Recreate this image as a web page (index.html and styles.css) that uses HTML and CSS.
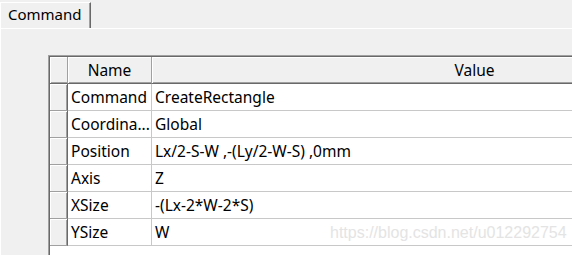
FILE: index.html
```html
<!DOCTYPE html>
<html lang="en">
<head>
    <meta charset="UTF-8">
    <title>Command</title>
    <link rel="stylesheet" href="styles.css">
</head>
<body>
<div class="tabs">
    <div class="tab">Command</div>
</div>
<div class="panel">
    <div class="grid">
        <table class="props">
            <colgroup>
                <col class="c-head">
                <col class="c-name">
                <col class="c-value">
            </colgroup>
            <tr>
                <th class="corner"></th>
                <th>Name</th>
                <th>Value</th>
            </tr>
            <tr><th class="rowhead"></th><td>Command</td><td>CreateRectangle</td></tr>
            <tr><th class="rowhead"></th><td>Coordina...</td><td>Global</td></tr>
            <tr><th class="rowhead"></th><td>Position</td><td>Lx/2-S-W ,-(Ly/2-W-S) ,0mm</td></tr>
            <tr><th class="rowhead"></th><td>Axis</td><td>Z</td></tr>
            <tr><th class="rowhead"></th><td>XSize</td><td>-(Lx-2*W-2*S)</td></tr>
            <tr><th class="rowhead"></th><td>YSize</td><td>W</td></tr>
        </table>
        <!-- 水印 -->
        <div class="mark">https://blog.csdn.net/u012292754</div>
    </div>
</div>
</body>
</html>
```
FILE: styles.css
```css
*{
    margin: 0;
    padding: 0;
    box-sizing: border-box;
}
html,body{
    width: 572px;
    height: 255px;
    overflow: hidden;
    background: #f0f0f0;
    font-family: "Noto Sans", "Open Sans", sans-serif;
    font-size: 15px;
    color: #000;
}
.tabs{
    height: 28px;
    display: flex;
    align-items: flex-end;
}
.tab{
    width: 91px;
    height: 26px;
    border-top: 1px solid #fff;
    border-left: 1px solid #fff;
    border-right: 1px solid #696969;
    box-shadow: inset -1px 0 #a0a0a0;
    padding-left: 7px;
    line-height: 23px;
}
.panel{
    height: 227px;
    border-top: 1px solid #fff;
    border-left: 1px solid #fff;
    padding: 26px 0 0 47px;
}
.grid{
    position: relative;
    width: 760px;
    height: 200px;
    background: #fff;
    border-top: 1px solid #a0a0a0;
    border-left: 1px solid #a0a0a0;
    box-shadow: inset 1px 1px #696969;
    padding: 1px 0 0 1px;
    overflow: hidden;
}
.props{
    table-layout: fixed;
    border-collapse: separate;
    border-spacing: 0;
    width: 748px;
    font-size: 15.5px;
}
.c-head{ width: 18px; }
.c-name{ width: 84px; }
.c-value{ width: 646px; }
.props th, .props td{
    height: 27px;
    line-height: 24px;
    white-space: nowrap;
    overflow: hidden;
}
.props th{
    font-weight: normal;
    background: #f0f0f0;
    border-right: 1px solid #a0a0a0;
    border-bottom: 1px solid #a0a0a0;
    box-shadow: inset 1px 1px #fff;
    text-align: center;
}
.props tr:first-child th{
    height: 27px;
    border-bottom: 1px solid #696969;
    box-shadow: inset 1px 1px #fff, inset 0 -1px #a0a0a0;
}
.props th.rowhead{
    border-right: 1px solid #696969;
    box-shadow: inset 1px 1px #fff, inset -1px 0 #a0a0a0;
}
.props td{
    padding-left: 3px;
    border-right: 1px solid #c8c8c8;
    border-bottom: 1px solid #c8c8c8;
}
.mark{
    position: absolute;
    left: 281px;
    top: 168px;
    font-family: "Liberation Sans", Arial, sans-serif;
    font-size: 16px;
    color: #e4e4e4;
    pointer-events: none;
}
```
